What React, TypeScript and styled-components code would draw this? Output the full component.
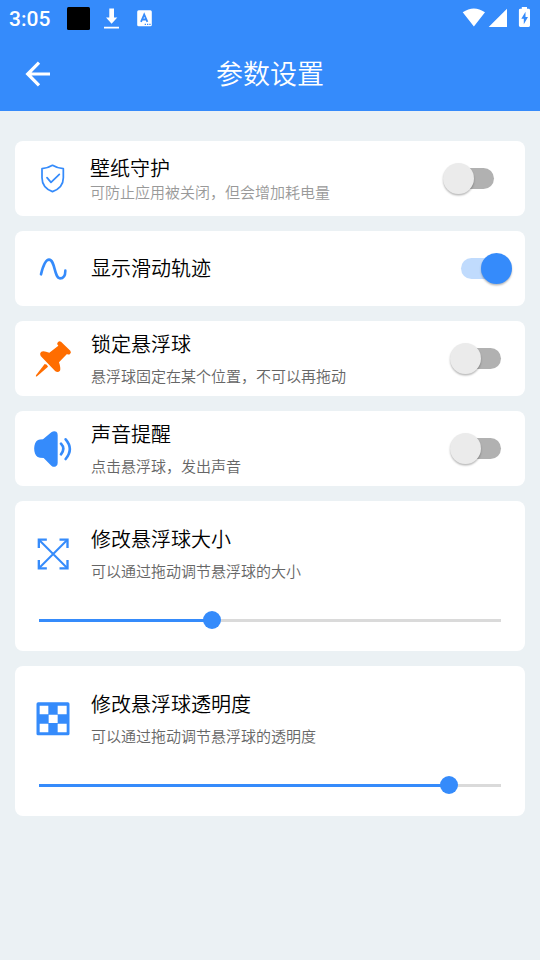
import React, { useState } from 'react';
import styled, { createGlobalStyle } from 'styled-components';

const BLUE = '#358bfb';

const GlobalStyle = createGlobalStyle`
  * { box-sizing: border-box; }
  body { margin: 0; background: #ebf1f4; font-family: Roboto, "Noto Sans CJK SC", sans-serif; }
`;

const Page = styled.div`
  width: 540px;
  min-height: 960px;
  background: #ebf1f4;
`;

const Header = styled.header`
  height: 111px;
  background: ${BLUE};
  color: #fff;
`;

const StatusBar = styled.div`
  display: flex;
  align-items: center;
  justify-content: space-between;
  height: 37px;
  padding: 0 9px;
`;

const StatusGroup = styled.div`
  display: flex;
  align-items: center;
  height: 37px;
`;

const Clock = styled.span`
  width: 58px;
  padding-top: 1px;
  font: 500 21px/37px Roboto, sans-serif;
`;

const Glyph = styled.svg`
  display: block;
  flex: none;
`;

const TitleBar = styled.div`
  display: grid;
  grid-template-columns: 76px 1fr 76px;
  align-items: center;
  height: 74px;
`;

const BackButton = styled.button`
  display: flex;
  width: 76px;
  height: 74px;
  padding: 0;
  border: 0;
  background: none;
`;

const PageTitle = styled.h1`
  margin: 0;
  padding-bottom: 2px;
  font: 350 27px/72px "Noto Sans CJK SC", sans-serif;
  text-align: center;
`;

const List = styled.main`
  display: flex;
  flex-direction: column;
  gap: 15px;
  padding: 30px 15px;
`;

const Card = styled.section<{ $tall?: boolean }>`
  height: ${(p) => (p.$tall ? 150 : 75)}px;
  padding-top: ${(p) => (p.$tall ? 15 : 0)}px;
  border-radius: 8px;
  background: #fff;
`;

const Row = styled.div<{ $end?: number }>`
  display: flex;
  align-items: center;
  height: 75px;
  padding: 0 ${(p) => p.$end ?? 24}px 0 18px;
`;

const Labels = styled.div<{ $compact?: boolean; $single?: boolean }>`
  display: flex;
  flex: 1;
  flex-direction: column;
  gap: ${(p) => (p.$compact ? 0 : 8)}px;
  margin-left: ${(p) => (p.$compact ? 17 : 18)}px;
  padding-top: ${(p) => (p.$compact ? 1 : 0)}px;
  padding-bottom: ${(p) => (p.$single ? 2 : 0)}px;
  font-family: "Noto Sans CJK SC", sans-serif;
  font-weight: 350;
`;

const Label = styled.div`
  font-size: 20px;
  line-height: 26px;
  color: #000;
`;

const Hint = styled.div<{ $faint?: boolean }>`
  font-size: 15px;
  line-height: 22px;
  color: ${(p) => (p.$faint ? '#999' : '#666')};
`;

const Track = styled.button<{ $on: boolean }>`
  display: flex;
  align-items: center;
  justify-content: ${(p) => (p.$on ? 'flex-end' : 'flex-start')};
  width: 46px;
  height: 21px;
  padding: 0;
  border: 0;
  border-radius: 11px;
  background: ${(p) => (p.$on ? '#c0dbfd' : '#b1b1b1')};
`;

const Thumb = styled.span<{ $on: boolean }>`
  flex: none;
  width: 31px;
  height: 31px;
  margin: 0 -5px;
  border-radius: 50%;
  background: ${(p) => (p.$on ? BLUE : '#ebebeb')};
  box-shadow: 0 1.5px 2px rgba(0, 0, 0, 0.28);
`;

const Slider = styled.div`
  display: flex;
  align-items: center;
  height: 59px;
  padding: 0 24px;
`;

const Filled = styled.div<{ $span: number }>`
  width: ${(p) => p.$span}px;
  height: 3px;
  margin-right: -9px;
  background: ${BLUE};
`;

const Knob = styled.div`
  z-index: 1;
  width: 18px;
  height: 18px;
  margin-top: -1px;
  border-radius: 50%;
  background: ${BLUE};
`;

const Rest = styled.div`
  flex: 1;
  height: 3px;
  margin-left: -9px;
  background: #dadada;
`;

function RowIcon({ children }: { children: React.ReactNode }) {
  return (
    <Glyph width="40" height="41" viewBox="69 69 120 123" fill="none">
      {children}
    </Glyph>
  );
}

const ShieldIcon = () => (
  <RowIcon>
    <g stroke={BLUE} strokeWidth="5.2" strokeLinejoin="round" strokeLinecap="round">
      <path d="M127.500 91Q113 100 96 101V128C96 149 107 162 127.500 170C148 162 160 149 160 128V101Q142 100 127.500 91Z" />
      <path d="M111 128L123 142L148 118" />
    </g>
  </RowIcon>
);

const WaveIcon = () => (
  <RowIcon>
    <path
      d="M93 148C99 123 106 104 117 104C136 104 132 160 150 160C161 160 166 151 166 137"
      stroke={BLUE}
      strokeWidth="7.800"
      strokeLinecap="round"
    />
  </RowIcon>
);

const PinIcon = () => (
  <RowIcon>
    <g fill="#ff6d00">
      <path d="M142 84Q146 76 153 80L181 107Q185 112 180 117Q176 120 171 117L147 142Q153 160 150 167Q144 174 136 169L92 123Q88 116 93 111Q99 105 118 113L145 92Q140 88 142 84Z" />
      <path d="M104 147Q112 147 114 155L82 183Q76 187 78 181Z" />
    </g>
  </RowIcon>
);

const SpeakerIcon = () => (
  <RowIcon>
    <path
      fill={BLUE}
      d="M84 105Q88 103 99 103L124 82Q132 76 139 80Q143 83 143 90V174Q143 182 138 184Q131 188 124 182L101 159Q88 159 83 156C69 147 69 113 84 105Z"
    />
    <path d="M153 116Q167 131 153 148M167 103Q192 132 167 162" stroke={BLUE} strokeWidth="7.800" strokeLinecap="round" />
  </RowIcon>
);

const ResizeIcon = () => (
  <RowIcon>
    <g transform="translate(-0.500 -31)" stroke={BLUE}>
      <path d="M88 121L172 205M172 121L88 205" strokeWidth="6" />
      <path d="M111 120H87V145M149 120H173V145M87 181V206H111M173 181V206H149" strokeWidth="7" />
    </g>
  </RowIcon>
);

const CheckerIcon = () => (
  <RowIcon>
    <rect x="79.500" y="82" width="99" height="99" rx="5" fill={BLUE} />
    <path
      fill="#fff"
      d="M89 92h26v26h-26zM143 92h27v26h-27zM116 119h27v25h-27zM89 146h26v26h-26zM143 146h27v26h-27z"
    />
  </RowIcon>
);

function Switch({ initial = false }: { initial?: boolean }) {
  const [on, setOn] = useState(initial);
  return (
    <Track role="switch" aria-checked={on} $on={on} onClick={() => setOn(!on)}>
      <Thumb $on={on} />
    </Track>
  );
}

function SliderBar({ value }: { value: number }) {
  return (
    <Slider>
      <Filled $span={value} />
      <Knob />
      <Rest />
    </Slider>
  );
}

export default function App() {
  return (
    <Page>
      <GlobalStyle />
      <Header>
        <StatusBar>
          <StatusGroup>
            <Clock>3:05</Clock>
            <Glyph width="90" height="37" viewBox="67 0 90 37">
              <rect x="67" y="7" width="23" height="23" rx="1.500" fill="#000" />
              <path fill="#fff" d="M109.300 8.500h4.700v9h3.300l-5.700 6.200l-5.600-6.200h3.300zM104 26.700h15v1.900h-15z" />
              <rect x="137.200" y="10.200" width="14.600" height="16" rx="1.500" fill="#fff" />
              <path d="M141 21.800L144.200 14.500L147.400 21.800M142.200 19.500H146.300" fill="none" stroke={BLUE} strokeWidth="1.800" />
              <path fill={BLUE} d="M144.700 23.700h1.300v1.300h-1.300zM147 23.700h1.300v1.300h-1.300zM149.300 23.700h1.300v1.300h-1.300z" />
            </Glyph>
          </StatusGroup>
          <Glyph width="70" height="37" viewBox="461 0 70 37">
            <path fill="#fff" d="M462.700 12.300Q473.800 4.500 485 12.300L473.900 26.500ZM507 8.700V27H488.700Z" />
            <path fill="#fff" d="M521.800 7h5.200v1.800h1.600q1.400 0 1.400 1.400v15.400q0 1.400-1.400 1.400h-8.300q-1.400 0-1.400-1.400V10.200q0-1.400 1.400-1.400h1.500z" />
            <path fill={BLUE} d="M525.500 11.800L521.300 18.800H523.800V24.300L528 17H525.500Z" />
          </Glyph>
        </StatusBar>
        <TitleBar>
          <BackButton aria-label="返回">
            <Glyph width="76" height="74" viewBox="0 37 76 74" fill="none">
              <path d="M50 74H28M39 62.700L27.700 74L39 85.300" stroke="#fff" strokeWidth="3.200" />
            </Glyph>
          </BackButton>
          <PageTitle>参数设置</PageTitle>
        </TitleBar>
      </Header>
      <List>
        <Card>
          <Row $end={31}>
            <ShieldIcon />
            <Labels $compact>
              <Label>壁纸守护</Label>
              <Hint $faint>可防止应用被关闭，但会增加耗电量</Hint>
            </Labels>
            <Switch />
          </Row>
        </Card>
        <Card>
          <Row $end={18}>
            <WaveIcon />
            <Labels $single>
              <Label>显示滑动轨迹</Label>
            </Labels>
            <Switch initial />
          </Row>
        </Card>
        <Card>
          <Row>
            <PinIcon />
            <Labels>
              <Label>锁定悬浮球</Label>
              <Hint>悬浮球固定在某个位置，不可以再拖动</Hint>
            </Labels>
            <Switch />
          </Row>
        </Card>
        <Card>
          <Row>
            <SpeakerIcon />
            <Labels>
              <Label>声音提醒</Label>
              <Hint>点击悬浮球，发出声音</Hint>
            </Labels>
            <Switch />
          </Row>
        </Card>
        <Card $tall>
          <Row>
            <ResizeIcon />
            <Labels>
              <Label>修改悬浮球大小</Label>
              <Hint>可以通过拖动调节悬浮球的大小</Hint>
            </Labels>
          </Row>
          <SliderBar value={173} />
        </Card>
        <Card $tall>
          <Row>
            <CheckerIcon />
            <Labels>
              <Label>修改悬浮球透明度</Label>
              <Hint>可以通过拖动调节悬浮球的透明度</Hint>
            </Labels>
          </Row>
          <SliderBar value={410} />
        </Card>
      </List>
    </Page>
  );
}
